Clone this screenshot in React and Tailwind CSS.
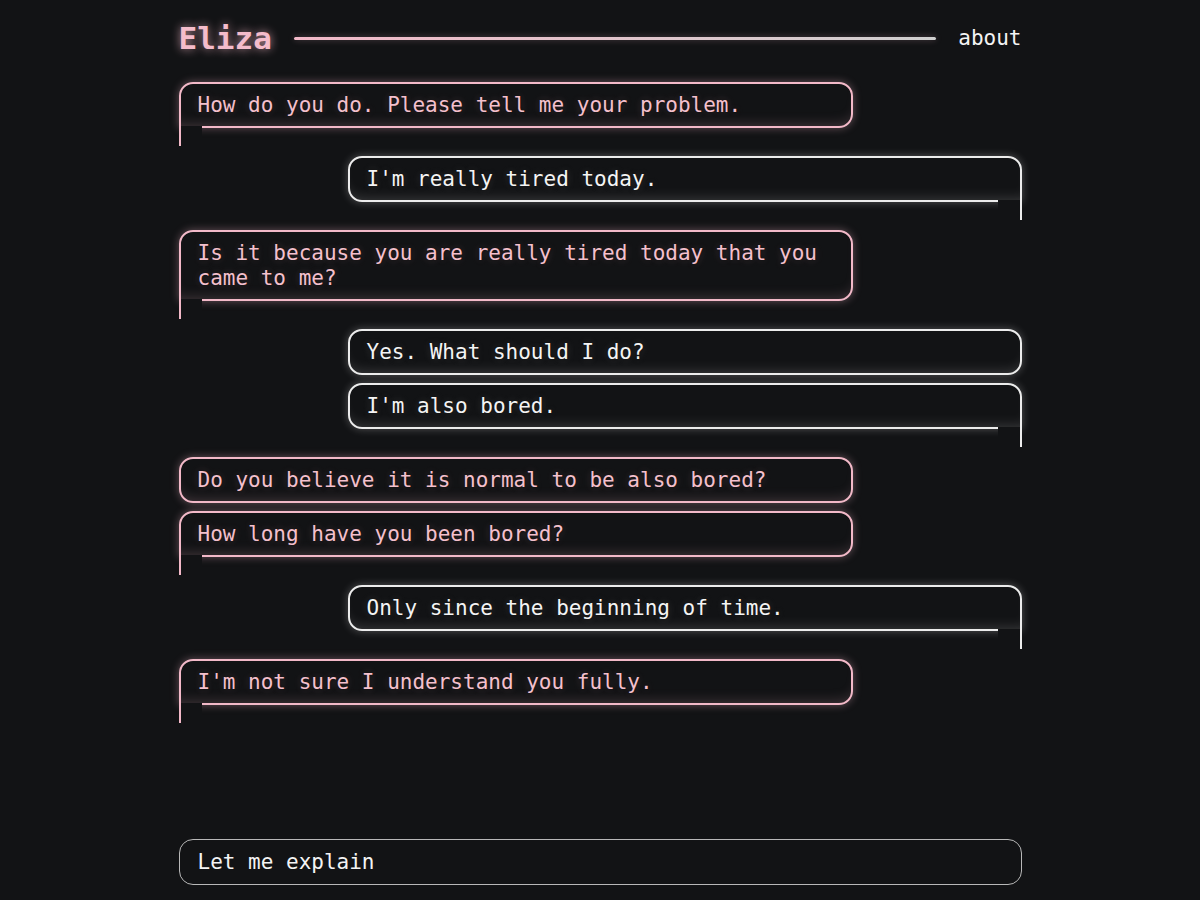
import React from "react";

const messages = [
  { from: "eliza", text: "How do you do. Please tell me your problem.", tail: true },
  { from: "user", text: "I'm really tired today.", tail: true },
  { from: "eliza", text: "Is it because you are really tired today that you came to me?", tail: true },
  { from: "user", text: "Yes. What should I do?", tail: false },
  { from: "user", text: "I'm also bored.", tail: true },
  { from: "eliza", text: "Do you believe it is normal to be also bored?", tail: false },
  { from: "eliza", text: "How long have you been bored?", tail: true },
  { from: "user", text: "Only since the beginning of time.", tail: true },
  { from: "eliza", text: "I'm not sure I understand you fully.", tail: true },
];

function Bubble({ from, text, tail }) {
  const eliza = from === "eliza";
  return (
    <div className={`relative w-[674px] ${eliza ? "self-start" : "self-end"} ${tail ? "mb-5" : ""}`}>
      <div
        className={
          eliza
            ? `border-2 border-[#f2b9c8] rounded-[14px] ${tail ? "rounded-bl-none" : ""} pl-[17px] pr-4 pt-[9px] pb-2 text-[#f4c0cd] shadow-[0_0_9px_rgba(242,185,200,0.38),inset_0_-10px_14px_-10px_rgba(242,185,200,0.25)] [text-shadow:0_0_4px_rgba(0,0,0,0.9),0_0_7px_rgba(244,192,205,0.3)]`
            : `border-2 border-[#ececec] rounded-[14px] ${tail ? "rounded-br-none" : ""} pl-[17px] pr-4 pt-[9px] pb-2 text-[#f4f4f4] shadow-[0_0_9px_rgba(235,235,235,0.3),inset_0_-10px_14px_-10px_rgba(235,235,235,0.22)] [text-shadow:0_0_4px_rgba(0,0,0,0.9),0_0_7px_rgba(240,240,240,0.25)]`
        }
      >
        {text}
      </div>
      {tail && eliza && (
        <>
          <div className="absolute top-[calc(100%-2px)] left-[2px] w-[21px] h-[14px] bg-[#121315]" />
          <div className="absolute top-full left-0 w-[2px] h-[18px] bg-[#f2b9c8]" />
        </>
      )}
      {tail && !eliza && (
        <>
          <div className="absolute top-[calc(100%-2px)] right-[2px] w-[22px] h-[14px] bg-[#121315]" />
          <div className="absolute top-full right-0 w-[2px] h-[18px] bg-[#ececec]" />
        </>
      )}
    </div>
  );
}

export default function App() {
  return (
    <div className="h-screen bg-[#121315] font-['DejaVu_Sans_Mono',monospace] text-[21px] leading-[25px] overflow-hidden">
      <div className="w-[843px] mx-auto h-full flex flex-col">
        {/* Header */}
        <header className="mt-5 h-9 flex items-center gap-[22px]">
          <h1 className="text-[31px] font-bold text-[#f5bccb] [text-shadow:0_0_10px_rgba(245,185,200,0.75)]">
            Eliza
          </h1>
          <div className="flex-1 h-[3px] rounded-full bg-gradient-to-r from-[#f2b9c8] to-[#cfcfcf] shadow-[0_0_6px_rgba(242,185,200,0.3)]" />
          <a className="text-[#f4f4f4] text-[21px]">about</a>
        </header>

        {/* Conversation */}
        <main className="mt-[26px] flex-1 flex flex-col gap-2">
          {messages.map((m, i) => (
            <Bubble key={i} {...m} />
          ))}
        </main>

        {/* Input */}
        <div className="mb-[15px] h-[46px] border-[1.5px] border-[#b8b8b8] rounded-[14px] flex items-center pl-[18px] text-[#f4f4f4]">
          Let me explain
        </div>
      </div>
    </div>
  );
}
